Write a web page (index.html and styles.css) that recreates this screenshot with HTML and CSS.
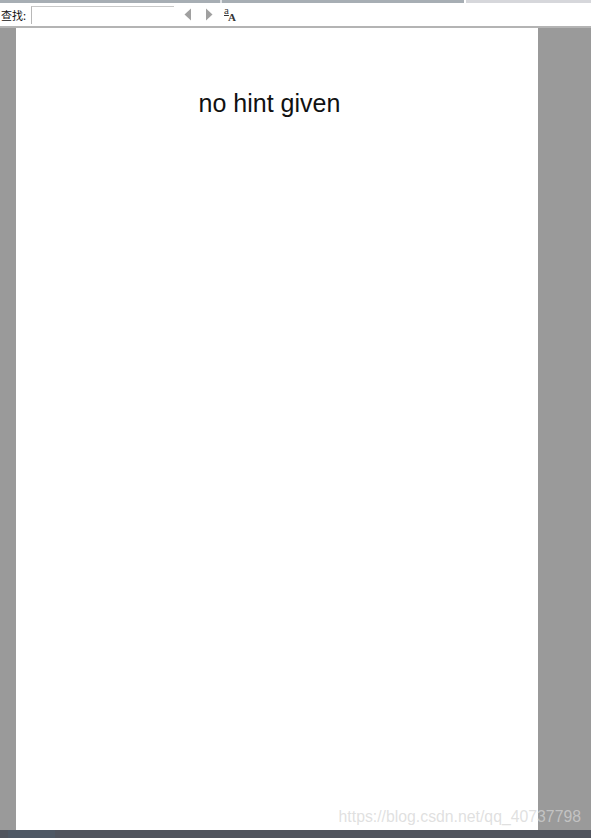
FILE: index.html
```html
<!DOCTYPE html>
<html lang="zh">
<head>
<meta charset="utf-8">
<title>no hint given</title>
<link rel="stylesheet" href="styles.css">
</head>
<body>
<div class="app">
  <div class="tabstrip">
    <div class="tab-dark"></div>
    <div class="tab-gap"></div>
    <div class="tab-dark tab-second"></div>
    <div class="tab-light"></div>
  </div>
  <div class="findbar">
    <span class="find-label">查找:</span>
    <div class="find-input"></div>
    <svg class="nav-icon prev" width="8" height="13" viewBox="0 0 8 13"><path d="M7 0.5V12.5L0.5 6.5Z" fill="#a0a0a0"/></svg>
    <svg class="nav-icon next" width="8" height="13" viewBox="0 0 8 13"><path d="M1 0.5V12.5L7.5 6.5Z" fill="#a0a0a0"/></svg>
    <span class="case-icon"><span class="case-a">a</span><span class="case-b">A</span></span>
  </div>
  <div class="viewer">
    <div class="page"><p class="page-text">no hint given</p></div>
  </div>
  <div class="taskbar"><div class="task-item"></div></div>
  <div class="watermark">https://blog.csdn.net/qq_40737798</div>
</div>
</body>
</html>
```
FILE: styles.css
```css
html, body {
  margin: 0;
  padding: 0;
  height: 100%;
  overflow: hidden;
}
.app {
  position: relative;
  width: 591px;
  height: 838px;
  display: flex;
  flex-direction: column;
  font-family: "Liberation Sans", Arial, sans-serif;
  background: #9a9a9a;
}
.tabstrip {
  height: 3px;
  display: flex;
  flex: none;
  background: #fff;
}
.tab-dark {
  width: 220px;
  background: #a7aeb4;
}
.tab-gap {
  width: 2px;
  background: #dfe1e4;
}
.tab-second {
  width: 242px;
}
.tab-light {
  margin-left: 2px;
  flex: 1;
  background: #d6d7db;
}
.findbar {
  height: 23px;
  flex: none;
  display: flex;
  align-items: center;
  background: #fff;
  border-bottom: 2px solid #b4b4b4;
}
.find-label {
  margin-left: 1px;
  width: 30px;
  font-family: "Noto Sans CJK SC", sans-serif;
  font-size: 11px;
  color: #111;
  white-space: nowrap;
}
.find-input {
  width: 142px;
  height: 17px;
  border-top: 1px solid #c8c8c8;
  border-left: 1px solid #b8b8b8;
}
.nav-icon {
  flex: none;
}
.prev {
  margin-left: 10px;
}
.next {
  margin-left: 13px;
}
.case-icon {
  position: relative;
  margin-left: 11px;
  width: 14px;
  height: 14px;
  font-family: "Liberation Serif", serif;
  color: #333;
}
.case-a {
  position: absolute;
  left: 0;
  top: -3px;
  font-size: 11px;
  line-height: 11px;
  text-decoration: underline;
}
.case-b {
  position: absolute;
  left: 4px;
  top: 3px;
  font-size: 11px;
  line-height: 12px;
  font-weight: bold;
}
.viewer {
  flex: 1;
  min-height: 0;
  padding-left: 16px;
}
.page {
  width: 522px;
  height: 100%;
  background: #fff;
  overflow: hidden;
}
.page-text {
  margin: 59px 0 0;
  text-align: center;
  padding-right: 15px;
  font-size: 25px;
  line-height: 32px;
  color: #111;
}
.taskbar {
  height: 8px;
  flex: none;
  display: flex;
  background: #50545e;
}
.task-item {
  width: 47px;
  margin-left: 8px;
  background: #4e5865;
}
.watermark {
  position: absolute;
  right: 10px;
  bottom: 11px;
  font-size: 15.8px;
  line-height: 20px;
  color: rgba(212, 212, 212, 0.72);
  white-space: nowrap;
}
```
